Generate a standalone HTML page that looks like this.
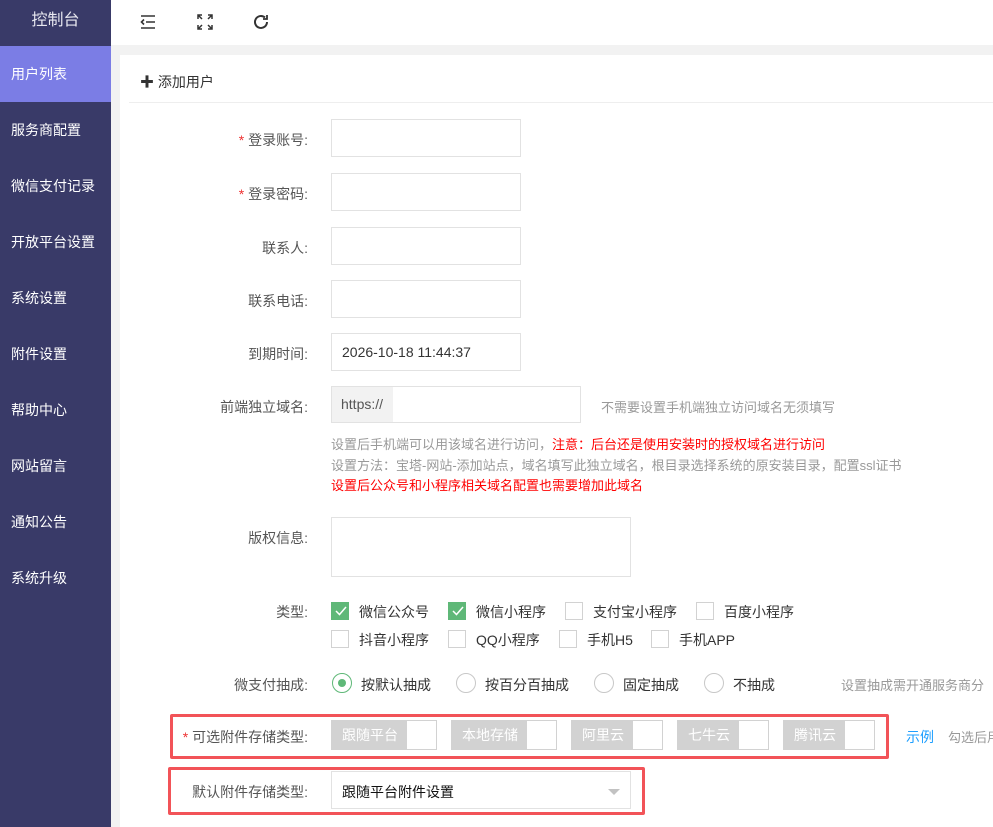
<!DOCTYPE html>
<html><head><meta charset="utf-8"><style>
*{margin:0;padding:0;box-sizing:border-box}
body{width:993px;height:827px;overflow:hidden;font-family:"Liberation Sans","Noto Sans CJK SC",sans-serif;font-size:14px;color:#333;background:#f2f2f2;position:relative}
.side{position:absolute;left:0;top:0;width:111px;height:827px;background:#393a68}
.side .t{height:46px;line-height:42px;text-align:center;color:#e8e8f0;font-size:16px}
.side .i{height:56px;line-height:56px;padding-left:11px;color:#fff;font-size:14px}
.side .i.a{background:#7b7de5}
.hdr{position:absolute;left:111px;top:0;right:0;height:45px;background:#fff}
.card{position:absolute;left:120px;top:55px;right:0;bottom:0;background:#fff}
.abs{position:absolute}
.lbl{position:absolute;right:685px;width:200px;text-align:right;color:#555}
.inp{position:absolute;left:331px;width:190px;height:38px;border:1px solid #e2e2e2;background:#fff}
.cb{position:absolute;width:18px;height:18px;border:1px solid #d2d2d2;background:#fff}
.cb.on{background:#5fb878;border-color:#5fb878}
.rd{position:absolute;width:20px;height:20px;border:1px solid #c8c8c8;border-radius:50%}
.tg{position:absolute;top:720px;height:30px;border:1px solid #d2d2d2;background:#fff}
.tg span{display:block;height:28px;line-height:28px;background:#d2d2d2;color:#fff;padding-left:10px}
.tx{position:absolute;white-space:nowrap}
</style></head><body>
<div class="side"><div class="t">控制台</div>
<div class="i a">用户列表</div><div class="i">服务商配置</div><div class="i">微信支付记录</div><div class="i">开放平台设置</div><div class="i">系统设置</div><div class="i">附件设置</div><div class="i">帮助中心</div><div class="i">网站留言</div><div class="i">通知公告</div><div class="i">系统升级</div></div>
<div class="hdr">
<svg class="abs" style="left:28px;top:13px" width="18" height="18" viewBox="0 0 18 18" fill="none" stroke="#333" stroke-width="1.6"><path d="M2 3h14M7 9h9M2 15h14M5 6.5L2.5 9 5 11.5"/></svg>
<svg class="abs" style="left:85px;top:13px" width="18" height="18" viewBox="0 0 18 18" fill="none" stroke="#333" stroke-width="1.5"><path d="M2 6V2h4M12 2h4v4M16 12v4h-4M6 16H2v-4M2 2l4 4M16 2l-4 4M16 16l-4-4M2 16l4-4"/></svg>
<svg class="abs" style="left:141px;top:13px" width="18" height="18" viewBox="0 0 18 18" fill="none" stroke="#333" stroke-width="2"><path d="M15 9a6 6 0 1 1-2-4.5"/><path d="M15 2v4h-4" stroke-width="1.8"/></svg>
</div>
<div class="card"><div class="tx" style="left:20px;top:17px;color:#333">✚ 添加用户</div><div class="abs" style="left:9px;right:0;top:47px;border-top:1px solid #eee"></div></div>

<div class="lbl" style="top:130px"><span style="color:#e33">*</span> 登录账号:</div><div class="inp" style="top:119px"></div>
<div class="lbl" style="top:184px"><span style="color:#e33">*</span> 登录密码:</div><div class="inp" style="top:173px"></div>
<div class="lbl" style="top:238px">联系人:</div><div class="inp" style="top:227px"></div>
<div class="lbl" style="top:291px">联系电话:</div><div class="inp" style="top:280px"></div>
<div class="lbl" style="top:344px">到期时间:</div><div class="inp" style="top:333px;padding:10px;color:#333">2026-10-18 11:44:37</div>
<div class="lbl" style="top:397px">前端独立域名:</div>
<div class="inp" style="top:386px;width:250px;height:37px"><div style="width:61px;height:35px;background:#f2f2f2;line-height:35px;padding-left:9px;color:#555">https://</div></div>
<div class="tx" style="left:601px;top:397px;color:#999;font-size:13px">不需要设置手机端独立访问域名无须填写</div>
<div class="tx" style="left:331px;top:434px;font-size:13px;color:#999">设置后手机端可以用该域名进行访问，<span style="color:#f00">注意：后台还是使用安装时的授权域名进行访问</span></div>
<div class="tx" style="left:331px;top:455px;font-size:13px;color:#999">设置方法：宝塔-网站-添加站点，域名填写此独立域名，根目录选择系统的原安装目录，配置ssl证书</div>
<div class="tx" style="left:331px;top:475px;font-size:13px;color:#f00">设置后公众号和小程序相关域名配置也需要增加此域名</div>
<div class="lbl" style="top:528px">版权信息:</div><div class="inp" style="top:517px;width:300px;height:60px"></div>
<div class="lbl" style="top:602px">类型:</div>
<div class="cb on" style="left:331px;top:602px"></div><div class="tx" style="left:359px;top:602px">微信公众号</div>
<div class="cb on" style="left:448px;top:602px"></div><div class="tx" style="left:476px;top:602px">微信小程序</div>
<div class="cb" style="left:565px;top:602px"></div><div class="tx" style="left:593px;top:602px">支付宝小程序</div>
<div class="cb" style="left:696px;top:602px"></div><div class="tx" style="left:724px;top:602px">百度小程序</div>
<div class="cb" style="left:331px;top:630px"></div><div class="tx" style="left:359px;top:630px">抖音小程序</div>
<div class="cb" style="left:448px;top:630px"></div><div class="tx" style="left:476px;top:630px">QQ小程序</div>
<div class="cb" style="left:559px;top:630px"></div><div class="tx" style="left:587px;top:630px">手机H5</div>
<div class="cb" style="left:651px;top:630px"></div><div class="tx" style="left:679px;top:630px">手机APP</div>
<svg class="abs" style="left:335px;top:606px" width="12" height="10"><path d="M1 5l3.5 3.5L11 1" stroke="#fff" stroke-width="1.5" fill="none"/></svg>
<svg class="abs" style="left:452px;top:606px" width="12" height="10"><path d="M1 5l3.5 3.5L11 1" stroke="#fff" stroke-width="1.5" fill="none"/></svg>
<div class="lbl" style="top:675px">微支付抽成:</div>
<div class="rd" style="left:332px;top:673px;border-color:#5fb878"><div style="margin:5px;width:8px;height:8px;border-radius:50%;background:#5fb878"></div></div><div class="tx" style="left:361px;top:675px">按默认抽成</div>
<div class="rd" style="left:456px;top:673px"></div><div class="tx" style="left:485px;top:675px">按百分百抽成</div>
<div class="rd" style="left:594px;top:673px"></div><div class="tx" style="left:623px;top:675px">固定抽成</div>
<div class="rd" style="left:704px;top:673px"></div><div class="tx" style="left:733px;top:675px">不抽成</div>
<div class="tx" style="left:841px;top:675px;color:#999;font-size:13px">设置抽成需开通服务商分</div>
<div class="abs" style="left:170px;top:714px;width:719px;height:45px;border:3px solid #f25358;border-radius:2px"></div>
<div class="lbl" style="top:727px"><span style="color:#e33">*</span> 可选附件存储类型:</div>
<div class="tg" style="left:331px;width:106px"><span style="width:75px">跟随平台</span></div>
<div class="tg" style="left:451px;width:106px"><span style="width:75px">本地存储</span></div>
<div class="tg" style="left:571px;width:92px"><span style="width:61px">阿里云</span></div>
<div class="tg" style="left:677px;width:92px"><span style="width:61px">七牛云</span></div>
<div class="tg" style="left:783px;width:92px"><span style="width:61px">腾讯云</span></div>
<div class="tx" style="left:906px;top:727px;color:#1e9fff">示例</div><div class="tx" style="left:948px;top:727px;color:#999;font-size:13px">勾选后用</div>
<div class="abs" style="left:168px;top:767px;width:477px;height:48px;border:3px solid #f25358;border-radius:2px"></div>
<div class="lbl" style="top:782px">默认附件存储类型:</div>
<div class="inp" style="top:771px;width:300px;padding:10px;color:#111">跟随平台附件设置<div class="abs" style="right:10px;top:17px;border:6px solid transparent;border-top-color:#c2c2c2;border-bottom:0"></div></div>
</body></html>
